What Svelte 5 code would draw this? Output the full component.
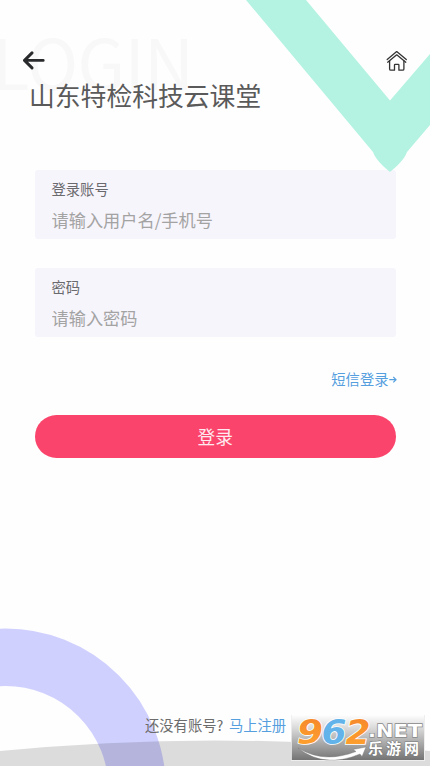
<script>
  let account = $state('');
  let password = $state('');
</script>

<main class="page">
  <svg class="backdrop" viewBox="0 0 430 766" aria-hidden="true">
    <path
      fill="#b4f3e1"
      d="M246 0H306L390 100.5L430 54V125L407 152C404 160 397 166 390 172C383 166 376 160 373 152Z"
    />
    <circle cx="5.5" cy="789" r="131.7" fill="none" stroke="#d0d0ff" stroke-width="57.4" />
    <ellipse cx="215" cy="2941" rx="2201" ry="2200.5" fill="#000" fill-opacity="0.135" />
    <text class="ghost" x="-8" y="90" textLength="202">LOGIN</text>
  </svg>

  <header class="topbar">
    <button class="icon" aria-label="返回">
      <svg width="24" height="20" viewBox="0 0 24 20">
        <path d="M22.2 9.4H4M11 1.9L3.5 9.4L11 16.9" fill="none" stroke="#292a2c" stroke-width="2.9" stroke-linecap="round" stroke-linejoin="round" />
      </svg>
    </button>
    <button class="icon" aria-label="首页">
      <svg width="22" height="22" viewBox="0 0 22 22" fill="none" stroke="#333" stroke-width="1.3" stroke-linejoin="round" stroke-linecap="round">
        <path d="M1.2 9.6L10.7 1.6L20.3 9.6" />
        <path d="M1.7 12.2L10.7 4.8L19.8 12.2" />
        <path d="M3.6 11V18.9Q3.6 20.2 4.8 20.2H8.5V15Q8.5 14.3 9.2 14.3H12.2Q12.9 14.3 12.9 15V20.2H16.7Q17.9 20.2 17.9 18.9V11" />
      </svg>
    </button>
  </header>

  <h1>山东特检科技云课堂</h1>

  <form onsubmit={(e) => e.preventDefault()}>
    <label class="field">
      <span>登录账号</span>
      <input type="text" placeholder="请输入用户名/手机号" bind:value={account} />
    </label>
    <label class="field">
      <span>密码</span>
      <input type="password" placeholder="请输入密码" bind:value={password} />
    </label>
    <a class="sms" href="#sms">
      短信登录
      <svg width="8" height="8" viewBox="0 0 8 8">
        <path d="M0.3 4.7H7M4.3 2L7 4.7L4.3 7.4" fill="none" stroke="currentColor" stroke-width="1.2" />
      </svg>
    </a>
    <button class="submit">登录</button>
  </form>

  <footer>还没有账号? <a href="#register">马上注册</a></footer>

  <svg class="watermark" width="134" height="46" viewBox="0 0 134 46">
    <defs>
      <linearGradient id="plate" x2="0" y2="1">
        <stop offset="0" stop-color="#fefefe" />
        <stop offset="0.3" stop-color="#d8d8d8" />
        <stop offset="1" stop-color="#747474" />
      </linearGradient>
      <linearGradient id="orange" x2="0" y2="1">
        <stop offset="0" stop-color="#f5852b" />
        <stop offset="1" stop-color="#ffa62f" />
      </linearGradient>
    </defs>
    <path d="M0 0H134V46H0Z" fill="#eee" />
    <path d="M0.8 0H133V45H0.8Z" fill="url(#plate)" />
    <g class="digits">
      <text x="6" y="29.4" textLength="26" lengthAdjust="spacingAndGlyphs" fill="url(#orange)">9</text>
      <text x="30.5" y="29.4" textLength="25" lengthAdjust="spacingAndGlyphs" fill="#62b3e9">6</text>
      <text x="54.5" y="29.4" textLength="25" lengthAdjust="spacingAndGlyphs" fill="url(#orange)">2</text>
    </g>
    <text class="net" x="77" y="22.4" textLength="54" lengthAdjust="spacingAndGlyphs">.NET</text>
    <text class="site" x="77" y="39.3" textLength="51">乐游网</text>
    <path d="M7 33Q33 49 65 36.5L62 34.5L75 32L71 41.5L69 39Q33 54 7 33Z" fill="#fff" stroke="#777" stroke-width="0.4" />
  </svg>
</main>

<style>
  :global(body) {
    background: #fefefe;
  }

  .page {
    position: relative;
    box-sizing: border-box;
    height: 766px;
    padding: 50px 34px 0 34.5px;
    overflow: hidden;
    display: flex;
    flex-direction: column;
    font-family: "Noto Sans CJK SC", sans-serif;
    font-weight: 400;
    color: #6c6c6c;
  }

  .backdrop {
    position: absolute;
    inset: 0;
    width: 430px;
    height: 766px;
    pointer-events: none;
  }

  .ghost {
    font-size: 69px;
    font-weight: 400;
    fill: #f8f8f8;
  }

  .topbar,
  h1,
  footer {
    z-index: 1;
  }

  .topbar {
    display: flex;
    justify-content: space-between;
    align-items: center;
    height: 22px;
    margin: 0 -12px 0 -13.5px;
  }

  button {
    padding: 0;
    border: 0;
    background: none;
    font-family: inherit;
    font-weight: inherit;
  }

  .icon,
  .icon svg {
    display: block;
  }

  h1 {
    margin: 4px 0 0 -5.5px;
    font-size: 25.8px;
    line-height: 38px;
    font-weight: 400;
    color: #5a5a5a;
    white-space: nowrap;
  }

  form {
    display: flex;
    flex-direction: column;
    margin-top: 56px;
  }

  .field {
    box-sizing: border-box;
    height: 69px;
    margin-bottom: 29px;
    padding: 9px 17px 0;
    border-radius: 3px;
    background: #f7f5fc;
  }

  .field span {
    display: block;
    font-size: 14.3px;
    line-height: 20px;
    color: #6a6a6e;
  }

  input {
    display: block;
    width: 100%;
    height: 28px;
    margin-top: 6px;
    padding: 0;
    border: 0;
    outline: 0;
    background: none;
    font: 400 17.2px "Noto Sans CJK SC", sans-serif;
  }

  input::placeholder {
    color: #a3a3a3;
  }

  a {
    color: #559fdf;
    text-decoration: none;
  }

  .sms {
    display: flex;
    align-items: center;
    align-self: flex-end;
    margin: 3px -0.5px 0 0;
    font-size: 14.3px;
    line-height: 20px;
  }

  .submit {
    height: 43px;
    margin-top: 26px;
    padding-bottom: 2px;
    border-radius: 22px;
    background: #fa446b;
    color: #ffeaf0;
    font-size: 17.7px;
  }

  footer {
    margin: auto 0 31px;
    line-height: 20px;
    font-size: 14.3px;
    padding-left: 110.5px;
    white-space: nowrap;
  }

  footer a {
    margin-left: 2.5px;
  }

  .watermark {
    position: absolute;
    left: 291px;
    top: 715px;
    z-index: 2;
  }

  .digits {
    font: italic 700 33.5px "DejaVu Sans", sans-serif;
    stroke: #fff;
    stroke-width: 1.6px;
    paint-order: stroke;
  }

  .net {
    font: 700 18px "DejaVu Sans", sans-serif;
    fill: #fff;
    stroke: #888;
    stroke-width: 1.3px;
    paint-order: stroke;
  }

  .site {
    font: 700 15px "Noto Sans CJK SC", sans-serif;
    fill: #fff;
    stroke: #777;
    stroke-width: 1px;
    paint-order: stroke;
  }
</style>
